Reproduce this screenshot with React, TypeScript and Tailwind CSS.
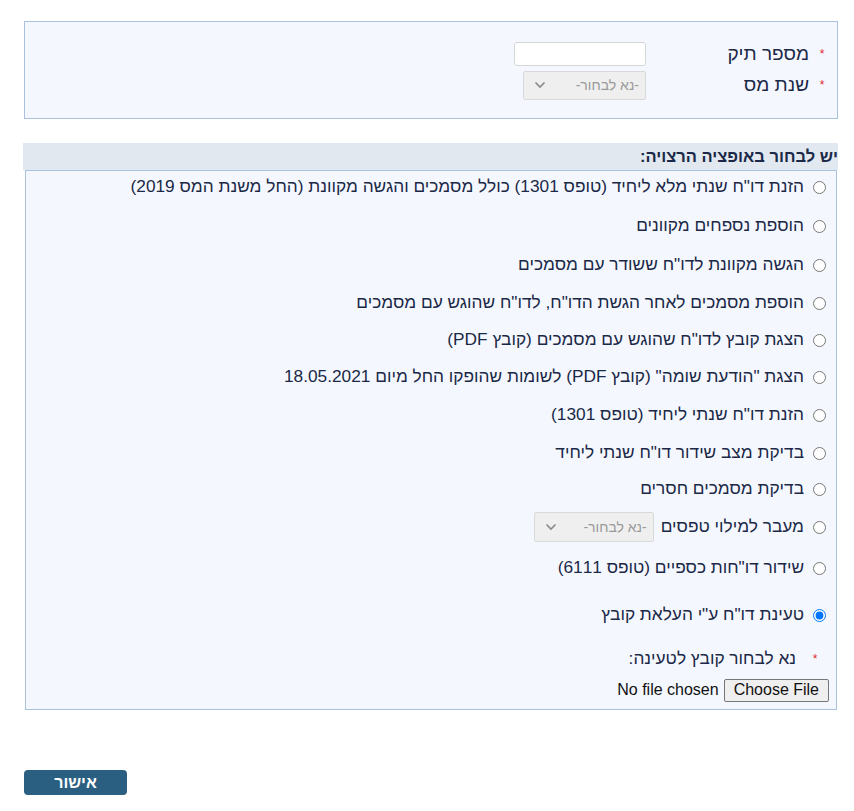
import React from "react";

const font = { fontFamily: '"Liberation Sans", Arial, sans-serif' };

function Chevron() {
  return (
    <svg width="12" height="8" viewBox="0 0 12 8" className="shrink-0">
      <path d="M1.5 1.5 L6 6 L10.5 1.5" fill="none" stroke="#8a8a8a" strokeWidth="1.6" />
    </svg>
  );
}

function DisabledSelect({ w, h }: { w: string; h: string }) {
  return (
    <div
      className={`${w} ${h} flex items-center justify-between border border-[#d9d9d9] bg-[#efefef] rounded-[2px] pr-[6px] pl-[10px] text-[14px] text-[#9a9a9a]`}
    >
      <span>-נא לבחור-</span>
      <Chevron />
    </div>
  );
}

function Row({
  children,
  mt,
  checked,
}: {
  children: React.ReactNode;
  mt: string;
  checked?: boolean;
}) {
  return (
    <div className={`${mt} h-[20px] flex items-center gap-[9px]`}>
      <input
        type="radio"
        name="opt"
        defaultChecked={checked}
        className="m-0 w-[13px] h-[13px] shrink-0"
      />
      <div className="flex items-center gap-[7px] whitespace-nowrap">{children}</div>
    </div>
  );
}

export default function App() {
  return (
    <div dir="rtl" style={font} className="w-[854px] min-h-[811px] bg-white text-[17.3px] text-[#1b2847]">
      <div className="pt-[21px] pr-[16px] pl-[23px]">
        {/* top box */}
        <div className="ml-[1px] h-[98px] border border-[#a9c1dd] bg-[#f4f8fe] pt-[19px] pr-[5px]">
          <div className="h-[26px] flex items-center">
            <span className="w-[20px] text-center text-[#e0262f] text-[12px]">*</span>
            <span className="w-[166px] pr-[3px] text-[19px]">מספר תיק</span>
            <div className="w-[132px] h-[24px] bg-white border border-[#d6d6d6] rounded-[3px]" />
          </div>
          <div className="mt-[3px] h-[30px] flex items-center">
            <span className="w-[20px] text-center text-[#e0262f] text-[12px]">*</span>
            <span className="w-[166px] pr-[3px] text-[19px]">שנת מס</span>
            <DisabledSelect w="w-[123px]" h="h-[29px]" />
          </div>
        </div>

        {/* heading */}
        <div className="mt-[24px] h-[27px] bg-[#e1e8f0] flex items-center font-bold text-[16.5px]">
          יש לבחור באופציה הרצויה:
        </div>

        {/* options box */}
        <div className="ml-[2px] mr-[1px] border border-[#a9c1dd] bg-[#f4f8fe] pt-[6px] pb-[9px] pr-[10px]">
          <Row mt="mt-[0px]">
            הזנת דו"ח שנתי מלא ליחיד (טופס 1301) כולל מסמכים והגשה מקוונת (החל משנת המס 2019)
          </Row>
          <Row mt="mt-[19px]">הוספת נספחים מקוונים</Row>
          <Row mt="mt-[19px]">הגשה מקוונת לדו"ח ששודר עם מסמכים</Row>
          <Row mt="mt-[18px]">הוספת מסמכים לאחר הגשת הדו"ח, לדו"ח שהוגש עם מסמכים</Row>
          <Row mt="mt-[17px]">הצגת קובץ לדו"ח שהוגש עם מסמכים (קובץ PDF)</Row>
          <Row mt="mt-[17px]">הצגת "הודעת שומה" (קובץ PDF) לשומות שהופקו החל מיום 18.05.2021</Row>
          <Row mt="mt-[18px]">הזנת דו"ח שנתי ליחיד (טופס 1301)</Row>
          <Row mt="mt-[18px]">בדיקת מצב שידור דו"ח שנתי ליחיד</Row>
          <Row mt="mt-[16px]">בדיקת מסמכים חסרים</Row>
          <Row mt="mt-[18px]">
            <span>מעבר למילוי טפסים</span>
            <DisabledSelect w="w-[120px]" h="h-[30px]" />
          </Row>
          <Row mt="mt-[21px]">שידור דו"חות כספיים (טופס 6111)</Row>
          <Row mt="mt-[27px]" checked>
            טעינת דו"ח ע"י העלאת קובץ
          </Row>
          <div className="mt-[24px] h-[20px] flex items-center">
            <span className="w-[22px] text-center text-[#e0262f] text-[12px]">*</span>
            <span className="pr-[8px]">נא לבחור קובץ לטעינה:</span>
          </div>
          <div className="mt-[11px] h-[20px] flex items-center gap-[5px] -mr-[3px]">
            <div className="h-[23px] px-[9px] flex items-center border border-[#767676] bg-[#efefef] rounded-[2px] text-[#111] text-[16px]">
              Choose File
            </div>
            <span className="text-[#111] text-[16px]">No file chosen</span>
          </div>
        </div>

        {/* submit */}
        <div className="mt-[60px] flex justify-end">
          <div className="ml-[1px] w-[103px] h-[25px] rounded-[4px] bg-[#2b5f82] text-white font-bold text-[16px] flex items-center justify-center">
            אישור
          </div>
        </div>
      </div>
    </div>
  );
}
